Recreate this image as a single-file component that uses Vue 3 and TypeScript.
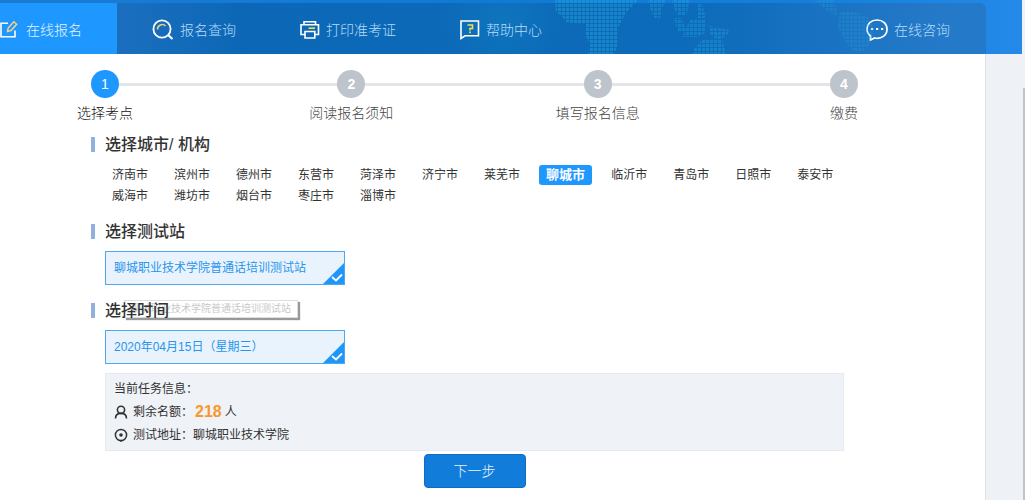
<script setup lang="ts">
import { ref } from 'vue'

interface Step {
  no: number
  label: string
}

const steps: Step[] = [
  { no: 1, label: '选择考点' },
  { no: 2, label: '阅读报名须知' },
  { no: 3, label: '填写报名信息' },
  { no: 4, label: '缴费' },
]
const currentStep = 1

const cities: string[] = [
  '济南市', '滨州市', '德州市', '东营市', '菏泽市', '济宁市', '莱芜市', '聊城市', '临沂市', '青岛市', '日照市', '泰安市',
  '威海市', '潍坊市', '烟台市', '枣庄市', '淄博市',
]
const city = ref('聊城市')
const station = '聊城职业技术学院普通话培训测试站'
const date = '2020年04月15日（星期三）'
const quota = 218
</script>

<template>
  <div class="page">
    <header class="banner">
      <nav class="nav">
        <a class="tab active" href="#signup">
          <svg width="20" height="20" viewBox="0 0 20 20" fill="none" stroke="#fff" stroke-width="1.6">
            <path d="M8 3.200H1V16.800H15V10.500" />
            <path d="M7.500 11.500L8.200 8L13.800 1.800L16.600 4.200L11 10.500Z" stroke="#f3d28a" stroke-width="1.500" />
          </svg>
          <span>在线报名</span>
        </a>
        <a class="tab query" href="#query">
          <svg width="22" height="22" viewBox="0 0 22 22" fill="none" stroke="#fff" stroke-width="1.8">
            <circle cx="10" cy="10" r="8.600" />
            <path d="M16 16L20.500 20" stroke-width="2.200" />
            <path d="M5.500 10.500A4.800 4.800 0 0 1 13.500 6.800" stroke="#e8d27a" stroke-width="1.600" />
          </svg>
          <span>报名查询</span>
        </a>
        <a class="tab print" href="#print">
          <svg width="20" height="20" viewBox="0 0 20 20" fill="none" stroke="#fff" stroke-width="1.600">
            <path d="M4 4.500V1.800H15.500V4.500M4.500 14.500H1V4.800H18.500V14.500H15M5 11.500H14.800V18H5Z" />
            <path d="M8.500 8.200H15" stroke="#f3e04b" />
          </svg>
          <span>打印准考证</span>
        </a>
        <a class="tab help" href="#help">
          <svg width="20" height="20" viewBox="0 0 20 20" fill="none" stroke="#fff" stroke-width="1.600">
            <path d="M1 1H18.500V15.800H5L1 18.500Z" />
            <path d="M7.500 5H12.500V8.500H10V10.500M10 11.500V13.200" stroke="#f3e04b" />
          </svg>
          <span>帮助中心</span>
        </a>
        <a class="tab chat" href="#chat">
          <svg width="22" height="22" viewBox="0 0 22 22" fill="none" stroke="#fff" stroke-width="1.700">
            <path d="M4.500 17V21L8.500 19C15.500 20.500 21 16 21 10.200C21 5 17 1 11 1C5 1 1 5 1 10C1 13 2.500 15.500 4.500 17Z" />
            <path d="M5 10H7.200M10 10H12.200M15 10H17.200" stroke-width="2.200" />
          </svg>
          <span>在线咨询</span>
        </a>
      </nav>
      <svg class="map" width="440" height="54" viewBox="0 0 440 54" aria-hidden="true">
        <defs>
          <pattern id="dots" width="4" height="4" patternUnits="userSpaceOnUse">
            <rect width="3" height="3" fill="#22a8dc" />
          </pattern>
        </defs>
        <g fill="url(#dots)">
          <path opacity=".45" d="M85 0H168L160 8L154 16L148 28L147 36L148 44L144 54H118L120 44L116 36V24L96 22L92 16L86 12Z" />
          <path opacity=".35" d="M178 0H196L192 8L190 18H184L180 8ZM202 0H220L216 16H208L204 8ZM228 4H232L236 18H228ZM204 18H212L216 32H208ZM220 20H236V32L228 37H212L216 28ZM238 25L248 28L260 30L256 36L248 40L240 34ZM232 40H252L256 54H222L224 48Z" />
          <path opacity=".25" d="M344 0H364L368 16L356 10ZM370 12H384L396 16L404 28L400 44L392 52H384L376 42L368 28Z" />
        </g>
      </svg>
    </header>

    <main class="sheet">
      <ol class="steps">
        <li v-for="s in steps" :key="s.no" :class="{ on: s.no === currentStep }">
          <b>{{ s.no }}</b>
          <span>{{ s.label }}</span>
        </li>
      </ol>

      <section class="block">
        <h2>选择城市/ 机构</h2>
        <div class="cities">
          <button v-for="c in cities" :key="c" type="button" :class="{ on: c === city }" @click="city = c">{{ c }}</button>
        </div>
      </section>

      <section class="block">
        <h2>选择测试站</h2>
        <button class="choice" type="button">
          {{ station }}
          <svg width="21" height="21" viewBox="0 0 21 21"><path d="M21 0V21H0Z" fill="#1e96fa" /><path d="M9 14L13 17.500L19 11.500" fill="none" stroke="#fff" stroke-width="1.800" /></svg>
        </button>
      </section>

      <section class="block">
        <div class="tip" role="tooltip">{{ station }}</div>
        <h2>选择时间</h2>
        <button class="choice" type="button">
          {{ date }}
          <svg width="21" height="21" viewBox="0 0 21 21"><path d="M21 0V21H0Z" fill="#1e96fa" /><path d="M9 14L13 17.500L19 11.500" fill="none" stroke="#fff" stroke-width="1.800" /></svg>
        </button>
      </section>

      <div class="info">
        <p>当前任务信息：</p>
        <p>
          <svg width="14" height="14" viewBox="0 0 14 14" fill="none" stroke="#333" stroke-width="1.600"><circle cx="7" cy="4.800" r="3.600" /><path d="M1.500 13.500C1.500 10.500 3.500 8.400 7 8.400C10.500 8.400 12.500 10.500 12.500 13.500" /></svg>
          <span>剩余名额：</span><strong>{{ quota }}</strong><span>人</span>
        </p>
        <p>
          <svg width="14" height="14" viewBox="0 0 14 14"><path d="M10 12L7 14L4 12Z" fill="#333" /><circle cx="7" cy="7" r="5.600" fill="none" stroke="#333" stroke-width="1.500" /><circle cx="7" cy="7" r="1.800" fill="#333" /></svg>
          <span>测试地址：聊城职业技术学院</span>
        </p>
      </div>

      <button class="next" type="button">下一步</button>
    </main>
    <div class="scroll" aria-hidden="true"></div>
  </div>
</template>

<style>
body {
  margin: 0;
  background: #eef2f6;
}
</style>

<style scoped>
.page {
  position: relative;
  min-height: 100vh;
  display: flex;
  flex-direction: column;
  font: 12px/20px "Liberation Sans", "Noto Sans CJK SC", sans-serif;
  color: #333;
}
button {
  font: inherit;
  cursor: pointer;
}
.banner {
  position: relative;
  margin-right: 3px;
  padding-top: 3px;
  background: linear-gradient(90deg, #1b7bd4 0%, #0f7ad6 45%, #1480dc 80%, #2489e8 100%);
}
.map {
  position: absolute;
  left: 46%;
  top: 0;
  pointer-events: none;
}
.nav {
  display: flex;
  height: 51px;
  margin-right: 36px;
  border-radius: 0 6px 0 0;
  background:
    radial-gradient(circle at 51% 30%, rgba(20, 150, 200, 0.25), transparent 60px),
    linear-gradient(90deg, #1d6fc0 11%, #0c68b6 24%, #0c6bba 70%, #2479c8 95%);
}
.tab {
  display: flex;
  align-items: center;
  gap: 6px;
  padding-top: 2px;
  color: #b5dcf8;
  font-size: 14px;
  font-weight: 300;
  text-decoration: none;
}
.tab svg {
  flex: none;
}
.active {
  width: 117px;
  box-sizing: border-box;
  background: #1e98ff;
  color: #e4f4ff;
}
.query { margin-left: 35px; }
.print { margin-left: 64px; }
.help { margin-left: 64px; }
.chat { margin-left: auto; margin-right: 36px; }
.sheet {
  flex: 1;
  margin-right: 39px;
  padding: 16px 127px 12px 91px;
  background: #fff;
  border-right: 1px solid #dde2e8;
}
.steps {
  position: relative;
  display: flex;
  justify-content: space-between;
  margin: 0;
  padding: 0;
  list-style: none;
}
.steps::before {
  content: "";
  position: absolute;
  left: 14px;
  right: 14px;
  top: 13px;
  height: 3px;
  background: #e4e5e6;
}
.steps li {
  position: relative;
  display: flex;
  flex-direction: column;
  align-items: center;
  gap: 5px;
  width: 28px;
  color: #444;
}
.steps b {
  width: 28px;
  line-height: 28px;
  border-radius: 50%;
  background: #bdc4cb;
  color: #fff;
  font-size: 14px;
  text-align: center;
}
.steps span {
  font-size: 14px;
  font-weight: 300;
  white-space: nowrap;
}
.steps .on {
  color: #111;
}
.steps .on b {
  background: #1e98ff;
  font-weight: 400;
}
.block {
  position: relative;
  margin-top: 18px;
}
.block h2 {
  position: relative;
  margin: 0 0 12px;
  padding-left: 10px;
  border-left: 4px solid #8fb1e0;
  font-size: 16px;
  font-weight: 500;
  line-height: 15px;
}
.steps + .block {
  margin-top: 14px;
}
.steps + .block h2 {
  margin-bottom: 13px;
}
.cities {
  display: flex;
  flex-wrap: wrap;
  gap: 1px 12px;
  margin: 0 14px;
}
.cities button {
  padding: 0 7px;
  border: 0;
  border-radius: 3px;
  background: none;
  color: #333;
  line-height: 20px;
}
.cities .on {
  background: #1e98ff;
  color: #fff;
  font-size: 13px;
  font-weight: 700;
}
.choice {
  position: relative;
  display: block;
  width: 240px;
  height: 34px;
  margin-left: 14px;
  padding: 0 8px;
  background: #e8f3fd;
  border: 1px solid #4fa8ee;
  color: #2a94ec;
  text-align: left;
}
.choice svg {
  position: absolute;
  right: 0;
  bottom: 0;
}
.tip {
  position: absolute;
  left: 33px;
  top: -3px;
  padding: 0 6px;
  border: 1px solid #ddd;
  background: #fff;
  box-shadow: 2px 2px 1px #999;
  color: #c8c8c8;
  font-size: 10px;
  line-height: 16px;
}
.info {
  margin: 9px 14px 0;
  padding: 4px 8px;
  border: 1px solid #e6eaf0;
  background: #eff2f7;
}
.info p {
  display: flex;
  align-items: center;
  margin: 0;
  line-height: 22px;
}
.info p + p {
  padding-top: 1px;
}
.info svg {
  margin-right: 5px;
}
.info strong {
  margin: 0 3px 0 2px;
  color: #f7982f;
  font-size: 16px;
}
.next {
  display: block;
  width: 102px;
  height: 34px;
  margin: 3px auto 0;
  border: 1px solid #0d6cc4;
  border-radius: 4px;
  background: #127cdb;
  color: #e8f5ff;
  font-size: 14px;
  font-weight: 300;
}
.scroll {
  position: absolute;
  right: 0;
  top: 88px;
  bottom: 0;
  width: 2px;
  background: #c1c3c5;
}
</style>
